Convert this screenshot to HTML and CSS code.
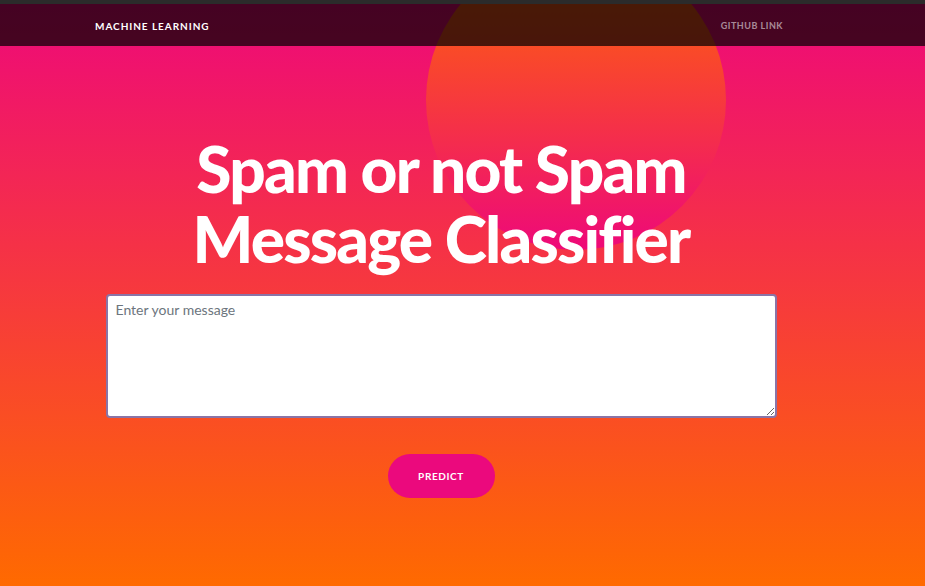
FILE: index.html
```html
<!DOCTYPE html>
<html lang="en">
<head>
<meta charset="utf-8">
<title>Spam or not Spam</title>
<link rel="stylesheet" href="styles.css">
</head>
<body>
<div class="chrome"></div>
<header class="masthead">
  <div class="circle"></div>
  <nav class="navbar">
    <div class="nav-inner">
      <a class="brand" href="#">Machine Learning</a>
      <a class="nav-link" href="#">Github Link</a>
    </div>
  </nav>
  <main class="content">
    <h1 class="title">Spam or not Spam<br>Message Classifier</h1>
    <form class="form">
      <textarea class="message" placeholder="Enter your message"></textarea>
      <button type="button" class="btn">Predict</button>
    </form>
  </main>
</header>
</body>
</html>
```

FILE: styles.css
```css
* { box-sizing: border-box; }
html, body { margin: 0; padding: 0; }
body {
  width: 925px;
  height: 586px;
  overflow: hidden;
  font-family: "Lato", "Liberation Sans", sans-serif;
  background: #2b2b2b;
}
.chrome { height: 4px; background: #2b2b2b; }
.masthead {
  position: relative;
  height: 582px;
  overflow: hidden;
  background: linear-gradient(0deg, #ff6a00 0%, #ee0979 100%);
}
.circle {
  position: absolute;
  left: 426px;
  top: -54px;
  width: 300px;
  height: 300px;
  border-radius: 50%;
  background: linear-gradient(0deg, #ee0979 0%, #ff6a00 100%);
}
.navbar {
  position: relative;
  height: 42px;
  background: rgba(0, 0, 0, 0.71);
}
.nav-inner {
  width: 884px;
  height: 100%;
  display: flex;
  align-items: center;
  justify-content: space-between;
  padding: 1px 101px 0 95px;
}
.brand, .nav-link {
  font-family: "Lato", sans-serif;
  font-weight: 700;
  font-size: 10px;
  letter-spacing: 0.95px;
  text-transform: uppercase;
  text-decoration: none;
}
.brand { color: #ffffff; }
.nav-link { color: rgba(255, 255, 255, 0.55); font-size: 9px; letter-spacing: 0.5px; }
.content {
  position: relative;
  width: 882px;
  display: flex;
  flex-direction: column;
  align-items: center;
}
.title {
  margin: 88px 0 0;
  color: #ffffff;
  font-family: "Lato", sans-serif;
  font-weight: 900;
  font-size: 64px;
  line-height: 70px;
  text-align: center;
  letter-spacing: -1.8px;
}
.form {
  display: flex;
  flex-direction: column;
  align-items: center;
  margin-top: 20px;
}
.message {
  width: 671px;
  height: 124px;
  border: 2px solid #8a74a6;
  border-radius: 4px;
  padding: 5px 8px;
  font-family: "Lato", sans-serif;
  font-size: 14px;
  color: #495057;
  background: #ffffff;
  resize: both;
  outline: none;
}
.message::placeholder { color: #6c757d; }
.btn {
  margin-top: 36px;
  width: 107px;
  height: 44px;
  border: none;
  border-radius: 22px;
  background: #eb097d;
  color: #ffffff;
  font-family: "Lato", sans-serif;
  font-weight: 700;
  font-size: 10px;
  letter-spacing: 0.6px;
  text-transform: uppercase;
}
```
